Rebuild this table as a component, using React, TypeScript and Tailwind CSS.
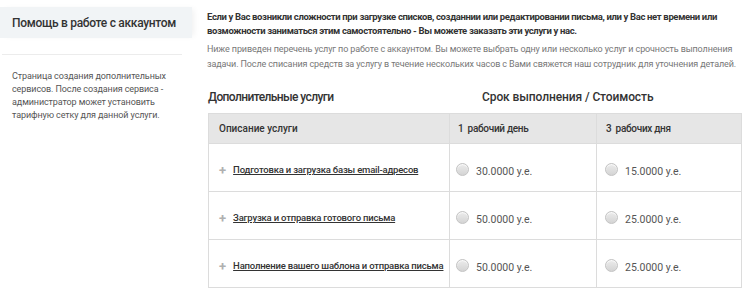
const services = [
  { name: "Подготовка и загрузка базы email-адресов", p1: "30.0000 у.е.", p3: "15.0000 у.е." },
  { name: "Загрузка и отправка готового письма", p1: "50.0000 у.е.", p3: "25.0000 у.е." },
  { name: "Наполнение вашего шаблона и отправка письма", p1: "50.0000 у.е.", p3: "25.0000 у.е." },
];

function Radio() {
  return (
    <span className="inline-block w-[13px] h-[13px] rounded-full border border-[#c4c4c4] bg-gradient-to-b from-[#ececec] to-[#d4d4d4] shadow-[inset_0_1px_1px_rgba(255,255,255,0.8)] shrink-0" />
  );
}

export default function App() {
  return (
    <div className="flex w-[748px] h-[295px] bg-white font-['Roboto',sans-serif] text-[#333] overflow-hidden">
      <aside className="w-[192px] shrink-0 pt-[7px]">
        <div className="h-[31px] bg-[#f1f4f6] flex items-center pl-[12px] text-[12px] font-medium tracking-[-0.3px] whitespace-nowrap text-[#333] shadow-[4px_0_6px_-2px_rgba(0,0,0,0.06)]">
          Помощь в работе с аккаунтом
        </div>
        <div className="mt-[16px] mx-[2px] mr-[10px] border-t border-[#ececec]" />
        <p className="mt-[15px] pl-[12px] text-[9px] leading-[13px] tracking-[-0.1px] whitespace-nowrap text-[#555]">
          Страница создания дополнительных
          <br />
          сервисов. После создания сервиса -
          <br />
          администратор может установить
          <br />
          тарифную сетку для данной услуги.
        </p>
      </aside>
      <main className="flex-1 pl-[15px] pt-[10px]">
        <p className="text-[9.5px] leading-[14px] font-bold tracking-[-0.35px] whitespace-nowrap text-[#333]">
          Если у Вас возникли сложности при загрузке списков, созданнии или редактировании письма, или у Вас нет времени или
          <br />
          возможности заниматься этим самостоятельно - Вы можете заказать эти услуги у нас.
        </p>
        <p className="mt-[4px] text-[9px] leading-[15px] tracking-[-0.12px] whitespace-nowrap text-[#777]">
          Ниже приведен перечень услуг по работе с аккаунтом. Вы можете выбрать одну или несколько услуг и срочность выполнения
          <br />
          задачи. После списания средств за услугу в течение нескольких часов с Вами свяжется наш сотрудник для уточнения деталей.
        </p>
        <div className="flex mt-[17px] h-[16px] items-center text-[12px] font-medium text-[#333]">
          <div className="w-[275px] pl-[1px] tracking-[-0.6px]">Дополнительные услуги</div>
          <div className="tracking-[-0.1px]">Срок выполнения / Стоимость</div>
        </div>
        <table className="mt-[8px] ml-[1px] w-[534px] border-collapse border border-[#dcdcdc] text-[10px]">
          <thead>
            <tr className="h-[30px] bg-[#e6e6e6] text-[#333]">
              <th className="w-[241px] border border-[#dcdcdc] text-left font-medium pl-[10px]">Описание услуги</th>
              <th className="w-[147px] border border-[#dcdcdc] text-left font-medium pl-[8px] tracking-[-0.3px]">
                1 <span className="ml-[2px]">рабочий день</span>
              </th>
              <th className="border border-[#dcdcdc] text-left font-medium pl-[9px] tracking-[-0.3px]">
                3 <span className="ml-[2px]">рабочих дня</span>
              </th>
            </tr>
          </thead>
          <tbody>
            {services.map((s) => (
              <tr key={s.name} className="h-[48px]">
                <td className="border border-[#dcdcdc] pl-[10px] pt-[6px]">
                  <div className="flex items-center gap-[7px]">
                    <span className="text-[#b0b0b0] text-[13px] font-bold leading-none">+</span>
                    <a className="underline font-medium text-[9.5px] tracking-[-0.2px] whitespace-nowrap text-[#333]">{s.name}</a>
                  </div>
                </td>
                <td className="border border-[#dcdcdc] pl-[6px] pt-[4px]">
                  <div className="flex items-center gap-[7px] text-[10.5px] text-[#555]">
                    <Radio />
                    <span className="mt-[5px]">{s.p1}</span>
                  </div>
                </td>
                <td className="border border-[#dcdcdc] pl-[8px] pt-[4px]">
                  <div className="flex items-center gap-[7px] text-[10.5px] text-[#555]">
                    <Radio />
                    <span className="mt-[5px]">{s.p3}</span>
                  </div>
                </td>
              </tr>
            ))}
          </tbody>
        </table>
      </main>
    </div>
  );
}
